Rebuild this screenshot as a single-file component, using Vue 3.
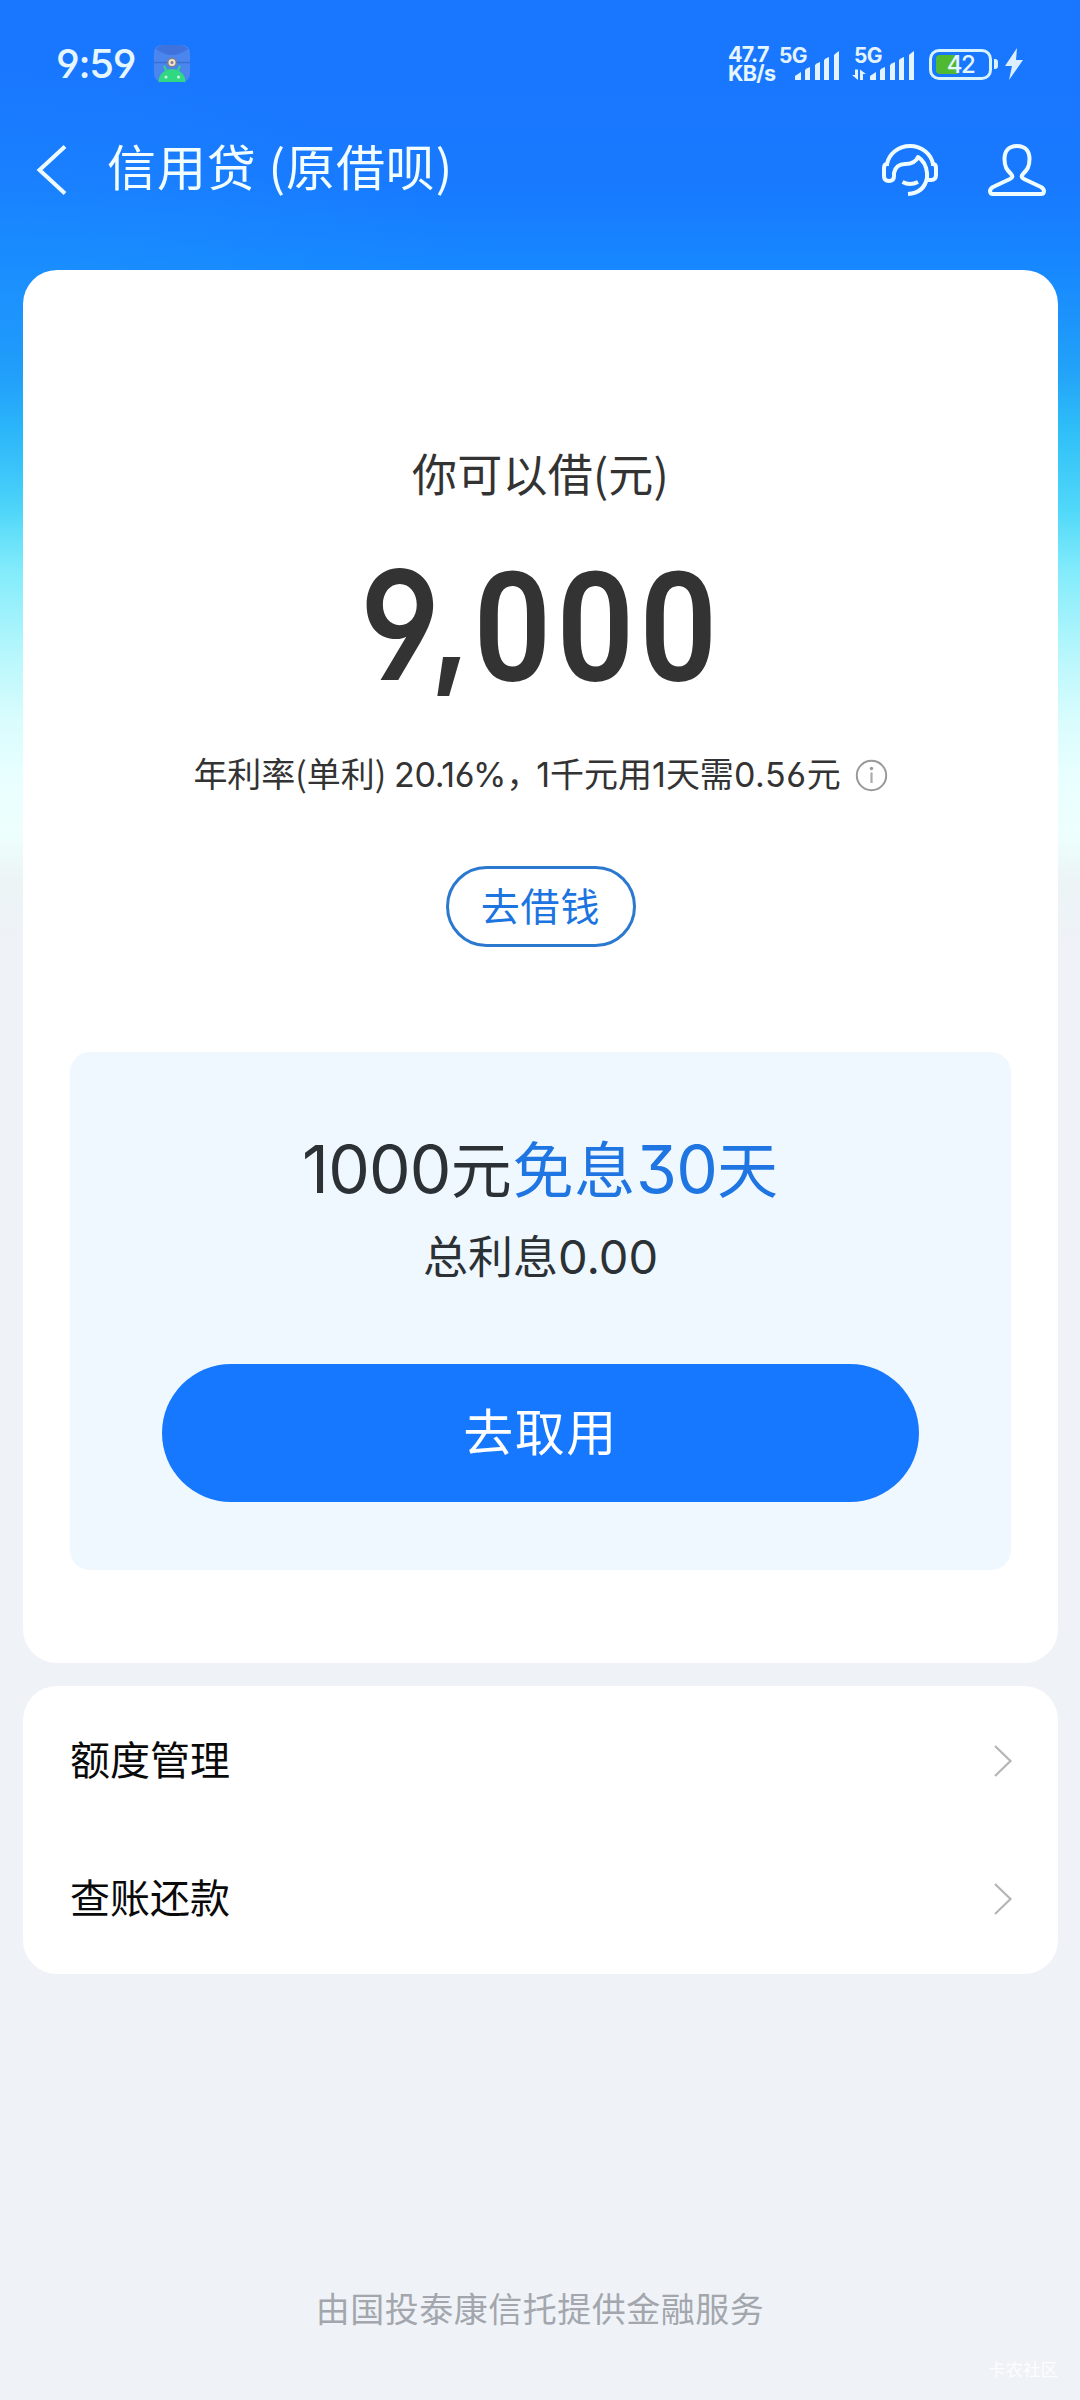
<script setup>
const rows = ['额度管理', '查账还款']
</script>

<template>
  <div class="page">
    <header class="status">
      <span class="time">9:59</span>
      <svg class="app-icon" width="36" height="38" viewBox="0 0 36 38">
        <rect width="36" height="37" rx="8" fill="#4a86ee" />
        <path d="M2 4Q18 16 34 4Q30 0 26 0H10Q5 0 2 4Z" fill="#3f72dc" />
        <path d="M0 17.500H36" stroke="#3b6fd0" stroke-width="1.500" />
        <path d="M10 21L13 27M26 21L23 27" stroke="#31d883" stroke-width="2" />
        <path d="M4.500 37A13.500 13 0 0 1 31.500 37Z" fill="#31d883" />
        <circle cx="12" cy="32" r="1.500" fill="#c9f8df" />
        <circle cx="24.500" cy="32" r="1.500" fill="#c9f8df" />
        <circle cx="18" cy="17.500" r="5" fill="#7b7f94" />
        <circle cx="18" cy="17.500" r="2.500" fill="none" stroke="#f3e3c4" stroke-width="2" />
      </svg>
      <div class="speed"><span>47.7</span><span>KB/s</span></div>
      <svg class="signals" width="140" height="44" viewBox="0 -4 140 44">
        <g fill="#e3f3ff">
          <text x="0" y="17" class="net">5G</text>
          <g id="bars">
            <path d="M16 34V30L22 26V34Z" />
            <path d="M26 34V24Q28 22 31 21V34Z" />
            <path d="M36 34V19Q38 17 41 16V34Z" />
            <path d="M45 34V14Q47 12 50 11V34Z" />
            <path d="M55 34V9Q57 7 60 5V34Z" />
          </g>
          <text x="75" y="17" class="net">5G</text>
          <path d="M76 23.500H79V34L73 29H76ZM81 34V23.500L87 28H84V34Z" />
          <use href="#bars" x="75" />
        </g>
      </svg>
      <div class="battery">
        <div class="shell"><i class="charge"></i><span>42</span></div>
        <i class="nub"></i>
      </div>
      <svg class="bolt" width="18" height="32" viewBox="0 0 18 32">
        <path d="M12 0L0 18H7L4 32L18 12H11Z" fill="#dcefff" />
      </svg>
    </header>

    <nav class="nav">
      <svg class="back" width="32" height="52" viewBox="0 0 32 52">
        <path d="M30 2.500L4.500 26L30 49.500" fill="none" stroke="#effcff" stroke-width="4" />
      </svg>
      <h1>信用贷 (原借呗)</h1>
      <svg class="agent" width="58" height="54" viewBox="0 0 58 54" fill="none" stroke="#effcff" stroke-width="4" stroke-linejoin="round">
        <path d="M6 21C8 11 17 3 29 3S50 11 52 21" />
        <path d="M6 21H8M6 21Q3 21 3 25V33Q3 38 8 38Q13 38 13 33V30Q15 21 24 21Q34 21 37 14Q45 19 46 30V35Q43 50 27 51M46 37H50Q55 37 55 32V25Q55 21 52 21H50" />
        <path d="M21.500 39Q29 43 37 39" />
      </svg>
      <svg class="user" width="60" height="54" viewBox="0 0 60 54" fill="none" stroke="#effcff" stroke-width="4" stroke-linejoin="round">
        <path d="M30 3C21 3 17.500 9 17.500 16C17.500 24 20 27 24 31Q27 34 23 36L6 44Q3 46 3 48Q3 51 6 51H54Q57 51 57 48Q57 46 54 44L37 36Q33 34 36 31C40 27 42.500 24 42.500 16C42.500 9 39 3 30 3Z" />
      </svg>
    </nav>

    <main>
      <section class="card loan">
        <p class="label">你可以借(元)</p>
        <p class="amount"><span class="nine">9</span><span class="comma">,</span><span class="zero">0</span><span class="zero">0</span><span class="zero">0</span></p>
        <p class="rate">
          <span class="rate-text">年利率(单利) <b class="n1">20.16%</b><i class="sep">，</i><b>1</b>千元用<b>1</b>天需<b>0.56</b>元</span>
          <svg width="33" height="33" viewBox="0 0 33 33">
            <circle cx="16.500" cy="16.500" r="14.700" fill="none" stroke="#999" stroke-width="2" />
            <path d="M16.500 13.500V24" stroke="#aaa" stroke-width="2.200" />
            <circle cx="16.500" cy="9.500" r="1.700" fill="#999" />
          </svg>
        </p>
        <button class="outline"><span>去借钱</span></button>
        <div class="promo">
          <p class="offer"><b>1000</b>元<em>免息<b>30</b>天</em></p>
          <p class="interest">总利息<b>0.00</b></p>
          <button class="primary"><span>去取用</span></button>
        </div>
      </section>

      <section class="card list">
        <div v-for="row in rows" :key="row" class="row">
          <span>{{ row }}</span>
          <svg width="20" height="34" viewBox="0 0 20 34">
            <path d="M2 2L17.500 17L2 32" fill="none" stroke="#b5b5b5" stroke-width="2.200" />
          </svg>
        </div>
      </section>
    </main>

    <footer>
      <p class="provider">由国投泰康信托提供金融服务</p>
      <p class="mark">卡农社区</p>
    </footer>
  </div>
</template>

<style>
body {
  background: #eff3f8;
}
</style>

<style scoped>
.page {
  width: 1080px;
  height: 2400px;
  display: flex;
  flex-direction: column;
  overflow: hidden;
  font-family: "Noto Sans CJK SC", sans-serif;
  background:
    radial-gradient(ellipse 480px 230px at 0 300px, rgba(30, 150, 255, 0.5), rgba(30, 150, 255, 0)) no-repeat,
    linear-gradient(180deg, #1976ff 0, #1879ff 180px, #1686ff 260px, #1c94fb 320px, #22a2f8 370px, #2fbff8 430px, #50d8f9 510px, #82ebfb 570px, #b7f7fc 655px, #d8fcfd 717px, #e9ffff 780px, #edfffd 835px, #ecf4f6 880px, #eff2f7 950px, #eff3f8 100%);
}
p, h1 {
  margin: 0;
  font-weight: 400;
  white-space: nowrap;
}
b, em, i {
  font-style: normal;
  font-weight: 400;
}
b {
  font-family: Inter, sans-serif;
  font-feature-settings: "cv03", "cv04", "ss01";
}
button {
  font-family: inherit;
  padding: 0;
  box-sizing: border-box;
}
.status {
  display: flex;
  align-items: center;
  height: 128px;
  flex: none;
  padding-left: 56px;
  color: #e6f6ff;
}
.time {
  width: 98px;
  font: 500 40px/40px Inter, sans-serif;
  font-feature-settings: "cv04", "ss01";
  letter-spacing: -1.3px;
}
.speed {
  display: flex;
  flex-direction: column;
  width: 51px;
  margin-left: 538px;
  font: 700 21.5px/19px Inter, sans-serif;
  letter-spacing: -0.7px;
}
.net {
  font: 700 21px Inter, sans-serif;
  letter-spacing: -0.6px;
}
.signals {
  margin-right: 1px;
}
.battery {
  display: flex;
  align-items: center;
  width: 76px;
  margin-left: 9px;
}
.shell {
  position: relative;
  width: 63px;
  height: 31px;
  box-sizing: border-box;
  border: 3px solid #d6f3ff;
  border-radius: 10px;
  text-align: center;
  font: 500 24px/26px Inter, sans-serif;
  letter-spacing: -1.5px;
}
.charge {
  position: absolute;
  left: 4px;
  top: 3px;
  width: 22px;
  height: 19px;
  border-radius: 4px 0 0 4px;
  background: #50b932;
}
.shell span {
  position: relative;
}
.nub {
  width: 4px;
  height: 10px;
  margin-left: 2px;
  border-radius: 0 3px 3px 0;
  background: #d6f3ff;
}
.nav {
  display: flex;
  align-items: center;
  height: 84px;
  flex: none;
  padding-left: 35px;
  color: #f2fdff;
}
h1 {
  width: 774px;
  margin-left: 40px;
  padding-bottom: 11px;
  font-size: 49px;
  line-height: 60px;
  letter-spacing: 0.9px;
}
.user {
  margin-left: 48px;
}
main {
  display: flex;
  flex-direction: column;
  gap: 23px;
  padding: 58px 22px 0 23px;
}
.card {
  border-radius: 34px;
  background: #fff;
}
.loan {
  display: flex;
  flex-direction: column;
  align-items: center;
  height: 1393px;
  color: #333;
}
.label {
  margin-top: 173px;
  font-size: 45px;
  line-height: 60px;
  letter-spacing: 0.2px;
}
.amount {
  display: flex;
  margin-top: 42px;
  margin-left: 2px;
  height: 160px;
  font: 600 152px/160px Inter, sans-serif;
  font-feature-settings: "cv04", "ss01";
}
.amount span {
  display: flex;
  justify-content: center;
}
.amount .nine {
  width: 72px;
  transform: scaleX(0.87);
}
.amount .comma {
  width: 30px;
  margin-right: 5px;
  font-size: 132px;
  transform: translateY(-2px);
}
.amount .zero {
  width: 83px;
  font-family: Roboto, sans-serif;
  font-size: 153px;
  transform: translateY(4px) scaleX(0.89);
}
.rate {
  display: flex;
  align-items: center;
  gap: 14px;
  margin-top: 45px;
  height: 50px;
  font-size: 34px;
  line-height: 50px;
}
.rate-text {
  padding-bottom: 2px;
}
.n1 {
  letter-spacing: -0.3px;
}
.sep {
  margin-right: -4px;
}
.rate b:last-of-type {
  letter-spacing: 0.6px;
}
.outline {
  width: 190px;
  height: 81px;
  margin-top: 66px;
  border: 3px solid #2b78cf;
  border-radius: 41px;
  background: none;
  color: #1b74e0;
  font-size: 39px;
  letter-spacing: 0.8px;
}
.outline span, .primary span {
  display: block;
  padding-bottom: 6px;
}
.primary span {
  padding-bottom: 8px;
}
.promo {
  display: flex;
  flex-direction: column;
  align-items: center;
  width: 941px;
  height: 518px;
  margin-top: 105px;
  border-radius: 20px;
  background: #f0f8ff;
  color: #2b3135;
}
.offer {
  margin-top: 75px;
  font-size: 61px;
  line-height: 80px;
  letter-spacing: 0.8px;
}
.offer b {
  font-size: 66px;
  line-height: 60px;
  letter-spacing: -0.8px;
}
.offer em {
  color: #1f76e3;
}
.interest {
  margin-top: 18px;
  font-size: 45px;
  line-height: 60px;
}
.interest b {
  font-size: 47px;
  line-height: 50px;
}
.primary {
  width: 757px;
  height: 138px;
  margin-top: 79px;
  border: 0;
  border-radius: 69px;
  background: #1678ff;
  color: #fff;
  font-size: 50px;
  letter-spacing: 1.5px;
}
.list {
  box-sizing: border-box;
  height: 288px;
  padding: 6px 45px 0 47px;
}
.row {
  display: flex;
  align-items: center;
  justify-content: space-between;
  height: 138px;
  color: #0a0a0a;
  font-size: 40px;
  line-height: 60px;
}
.row span {
  padding-bottom: 6px;
}
footer {
  display: flex;
  flex-direction: column;
  margin-top: auto;
}
.provider {
  align-self: center;
  color: #a3a7ad;
  font-size: 34px;
  line-height: 50px;
  letter-spacing: 0.5px;
}
.mark {
  align-self: flex-end;
  margin: 22px 22px 17px 0;
  color: #fcfdfe;
  font-size: 17.5px;
  line-height: 28px;
}
</style>
